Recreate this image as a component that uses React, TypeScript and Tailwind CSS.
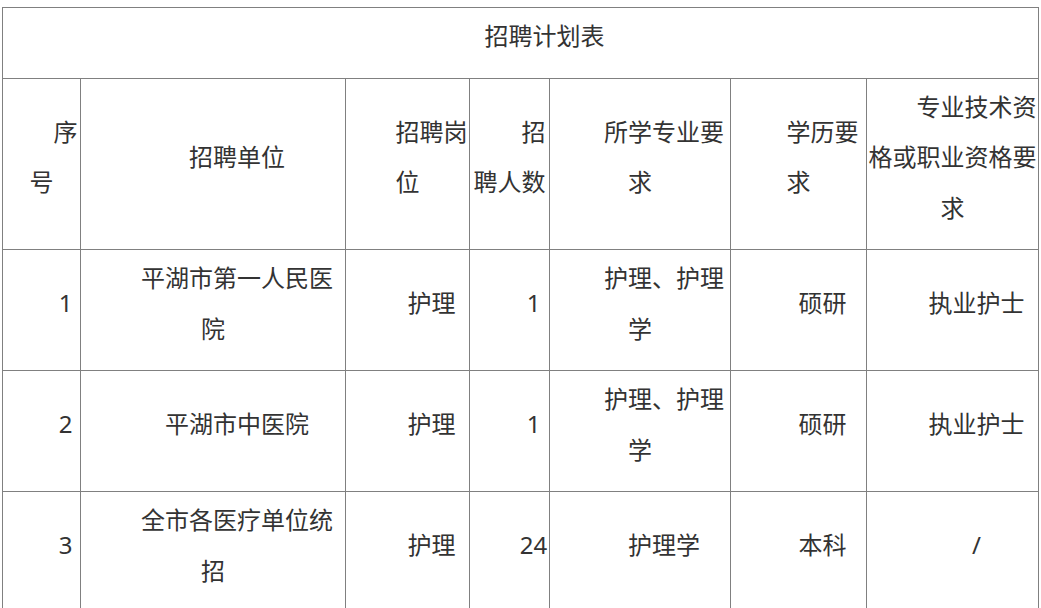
const COLS = [78, 265, 124, 80, 181, 136, 172];

const HEAD = [
  "序号",
  "招聘单位",
  "招聘岗位",
  "招聘人数",
  "所学专业要求",
  "学历要求",
  "专业技术资格或职业资格要求",
];

const ROWS = [
  ["1", "平湖市第一人民医院", "护理", "1", "护理、护理学", "硕研", "执业护士"],
  ["2", "平湖市中医院", "护理", "1", "护理、护理学", "硕研", "执业护士"],
  ["3", "全市各医疗单位统招", "护理", "24", "护理学", "本科", "/"],
];

const cell =
  "border border-[#808080] px-px pt-[3px] pb-[16px] align-middle text-center indent-[48px] break-all";

export default function App() {
  return (
    <main
      className="min-h-screen bg-white pl-[2px] pt-[7px] text-[#333333] text-[24px] leading-[50.5px]"
      style={{ fontFamily: '"Noto Sans", "Noto Sans CJK SC", sans-serif' }}
    >
      <table className="table-fixed border-collapse w-[1037px]">
        <colgroup>
          {COLS.map((w, i) => (
            <col key={i} style={{ width: w }} />
          ))}
        </colgroup>
        <tbody>
          <tr>
            <td colSpan={7} className={cell}>
              招聘计划表
            </td>
          </tr>
          <tr>
            {HEAD.map((h) => (
              <td key={h} className={cell}>
                {h}
              </td>
            ))}
          </tr>
          {ROWS.map((row) => (
            <tr key={row[0]}>
              {row.map((v, i) => (
                <td key={i} className={cell}>
                  {v}
                </td>
              ))}
            </tr>
          ))}
        </tbody>
      </table>
    </main>
  );
}
